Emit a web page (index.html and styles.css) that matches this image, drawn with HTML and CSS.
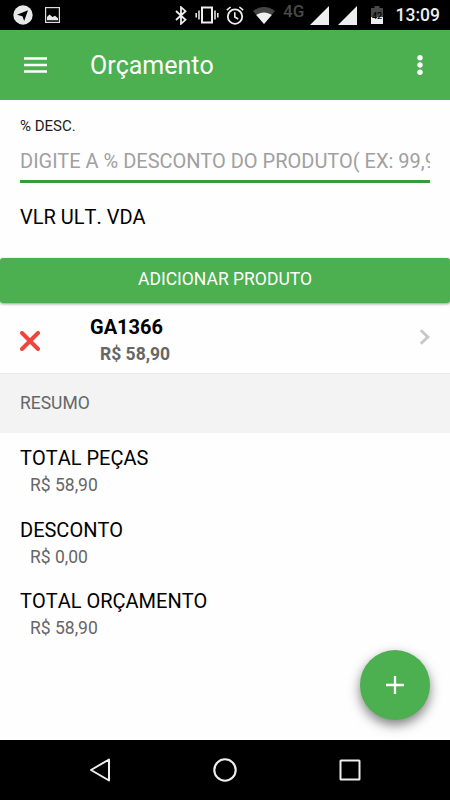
FILE: index.html
```html
<!DOCTYPE html>
<html lang="pt-BR">
<head>
    <meta charset="UTF-8">
    <meta name="viewport" content="width=device-width, initial-scale=1.0">
    <title>Orçamento</title>
    <link rel="stylesheet" href="styles.css">
</head>
<body>
    <div class="status-bar">
        <div class="status-left">
            <svg width="20" height="20" viewBox="0 0 20 20"><circle cx="10" cy="10" r="9.7" fill="#e8e8e8"/><path d="M4 9.8L15 5.2 11.2 16 9.4 11.2z" fill="#000"/></svg>
            <svg width="15" height="16" viewBox="0 0 15 16"><rect x=".6" y=".6" width="13.8" height="14.8" fill="none" stroke="#ddd" stroke-width="1.2"/><path d="M2 13.3V10L4.5 7.6 7.5 10 10 8.8 13 11.2V13.3z" fill="#e8e8e8"/></svg>
        </div>
        <div class="status-right">
            <svg class="bluetooth" width="12" height="19" viewBox="0 0 12 19"><path d="M1 5L10.5 13.8 6 17.8V1.2L10.5 5.2 1 14" fill="none" stroke="#eee" stroke-width="1.8"/></svg>
            <svg class="vibrate" width="24" height="18" viewBox="0 0 24 18"><path d="M7 1.500H17V16.500H7z" fill="none" stroke="#eee" stroke-width="2"/><path d="M4 4.500V13.500M20 4.500V13.500M1.200 7V11.500M22.800 7V11.500" stroke="#eee" stroke-width="1.500"/></svg>
            <svg class="alarm" width="18" height="19" viewBox="0 0 18 19"><circle cx="9" cy="10.6" r="7.2" fill="none" stroke="#eee" stroke-width="1.8"/><path d="M8.8 6.3V11L12.2 13M.8 4.2L4.6 1M17.2 4.2L13.4 1" fill="none" stroke="#eee" stroke-width="1.6"/></svg>
            <svg class="wifi" width="24" height="19" viewBox="0 0 24 19"><path d="M1 5C7.500-.5 16.500-.5 23 5L12 18z" fill="#454545"/><path d="M4.200 9C8.800 5.500 15.200 5.500 19.800 9L12 18z" fill="#f0f0f0"/></svg>
            <span class="network">4G</span>
            <svg class="signal" width="19" height="19" viewBox="0 0 19 19"><path d="M0 19L19 0V19z" fill="#eee"/></svg>
            <svg class="signal-two" width="19" height="19" viewBox="0 0 19 19"><path d="M0 19L19 0V19z" fill="#eee"/></svg>
            <svg class="battery" width="12" height="18" viewBox="0 0 12 18"><path d="M0 2H3.500V0H8.500V2H12V11H0z" fill="#484848"/><path d="M0 11H12V18H0z" fill="#eee"/><text x="6" y="12.500" text-anchor="middle">42</text></svg>
            <span class="clock">13:09</span>
        </div>
    </div>

    <header class="toolbar">
        <svg width="24" height="16" viewBox="0 0 24 16"><path d="M0 1.500H23M0 8H23M0 14.500H23" stroke="#fff" stroke-width="2.400"/></svg>
        <h1>Orçamento</h1>
        <svg width="6" height="20" viewBox="0 0 6 20"><g fill="#fff"><circle cx="3" cy="2.700" r="2.700"/><circle cx="3" cy="10" r="2.700"/><circle cx="3" cy="17.300" r="2.700"/></g></svg>
    </header>

    <main>
        <div class="field">
            <label for="desconto">% DESC.</label>
            <input id="desconto" type="text" placeholder="DIGITE A % DESCONTO DO PRODUTO( EX: 99,99)">
        </div>
        <div class="last-value">VLR ULT. VDA</div>
        <button class="add-button">ADICIONAR PRODUTO</button>

        <div class="product">
            <svg class="remove" width="20" height="20" viewBox="0 0 20 20"><path d="M2 2L18 18M18 2L2 18" stroke="#ee463c" stroke-width="4" stroke-linecap="round"/></svg>
            <div class="product-info">
                <div class="name">GA1366</div>
                <div class="price">R$ 58,90</div>
            </div>
            <svg class="chevron" width="11" height="16" viewBox="0 0 11 16"><path d="M1.800 1.300L8.800 8 1.800 14.700" fill="none" stroke="#c7c7cc" stroke-width="2.900"/></svg>
        </div>

        <div class="divider">RESUMO</div>

        <div class="total">
            <div class="name">TOTAL PEÇAS</div>
            <div class="price">R$ 58,90</div>
        </div>
        <div class="total">
            <div class="name">DESCONTO</div>
            <div class="price">R$ 0,00</div>
        </div>
        <div class="total">
            <div class="name">TOTAL ORÇAMENTO</div>
            <div class="price">R$ 58,90</div>
        </div>

        <button class="fab">
            <svg width="18" height="18" viewBox="0 0 18 18"><path d="M9 0V18M0 9H18" stroke="#fff" stroke-width="2.300"/></svg>
        </button>
    </main>

    <nav class="nav-bar">
        <svg width="22" height="26" viewBox="0 0 22 26"><path d="M2 13L20 2.500V23.500z" fill="none" stroke="#eee" stroke-width="2" stroke-linejoin="round"/></svg>
        <svg width="24" height="24" viewBox="0 0 24 24"><circle cx="12" cy="12" r="10.700" fill="none" stroke="#eee" stroke-width="2.100"/></svg>
        <svg width="22" height="22" viewBox="0 0 22 22"><rect x="1.500" y="1.500" width="19" height="19" rx=".5" fill="none" stroke="#eee" stroke-width="2"/></svg>
    </nav>
</body>
</html>
```
FILE: styles.css
```css
* {
    box-sizing: border-box;
}

body {
    margin: 0;
    width: 450px;
    height: 800px;
    display: flex;
    flex-direction: column;
    overflow: hidden;
    background-color: #fefefe;
    font-family: Roboto, "Liberation Sans", sans-serif;
    font-kerning: none;
    color: #000;
}

svg {
    display: block;
    flex: none;
}

/* Android status bar */
.status-bar {
    height: 30px;
    flex: none;
    display: flex;
    justify-content: space-between;
    align-items: center;
    padding: 0 10px 0 12.5px;
    background-color: #000;
}

.status-left,
.status-right {
    display: flex;
    align-items: center;
}

.status-left {
    gap: 12.5px;
}

.vibrate {
    margin-left: 8px;
}

.alarm {
    margin-left: 7px;
}

.wifi {
    margin-left: 8px;
}

.network {
    width: 24px;
    height: 20px;
    margin: -8px 0 0 7px;
    font-size: 17px;
    line-height: 20px;
    font-weight: 500;
    color: #484848;
}

.signal {
    margin-left: 3px;
}

.signal-two {
    margin-left: 9px;
}

.battery {
    margin-left: 14px;
}

.battery text {
    font-size: 9px;
    font-weight: 500;
}

.clock {
    width: 45px;
    margin-left: 12px;
    font-size: 17.5px;
    font-weight: 500;
    text-align: right;
    color: #eee;
}

/* Header */
.toolbar {
    height: 70px;
    flex: none;
    display: flex;
    align-items: center;
    padding: 0 27px 0 24px;
    background-color: #4caf50;
    color: #fff;
}

.toolbar h1 {
    flex: 1;
    margin: 1px 0 0 42px;
    font-size: 25px;
    font-weight: 400;
}

main {
    flex: 1;
    position: relative;
}

.field {
    padding: 16px 20px 0;
}

.field label {
    display: block;
    font-size: 15px;
    line-height: 20px;
    color: #222;
}

.field input {
    display: block;
    width: 100%;
    height: 47px;
    padding: 5px 0 0;
    border: none;
    border-bottom: 3px solid #359c3a;
    background: none;
    font-family: inherit;
    font-size: 20px;
}

.field input::placeholder {
    color: #a0a0a0;
}

.last-value {
    height: 75px;
    padding: 22px 20px 0;
    font-size: 20px;
    line-height: 24px;
}

.add-button {
    display: block;
    width: 100%;
    height: 45px;
    padding: 0 0 3px;
    border: none;
    border-radius: 3px;
    background-color: #4caf50;
    box-shadow: 0 1px 3px rgba(0, 0, 0, 0.4);
    font-family: inherit;
    font-size: 17.5px;
    color: #fff;
}

/* Product row */
.product {
    display: flex;
    height: 70px;
    padding: 12px 20px 0;
}

.product .remove {
    margin-top: 16px;
}

.product-info {
    flex: 1;
    margin-left: 50px;
    font-weight: 700;
}

.product .chevron {
    margin-top: 14px;
}

.name {
    font-size: 20px;
    line-height: 24px;
}

.price {
    margin-left: 10px;
    padding-top: 3px;
    font-size: 17.5px;
    line-height: 24px;
    color: #666;
}

.divider {
    height: 60px;
    padding-left: 20px;
    border-top: 1px solid #e9e9e9;
    background-color: #f3f3f3;
    font-size: 17.5px;
    line-height: 58px;
    color: #666;
}

.total {
    height: 71.3px;
    padding: 13.3px 20px 0;
}

.fab {
    position: absolute;
    right: 20px;
    bottom: 20px;
    width: 70px;
    height: 70px;
    display: flex;
    justify-content: center;
    align-items: center;
    border: none;
    border-radius: 50%;
    background-color: #4caf50;
    box-shadow: 0 5px 12px rgba(0, 0, 0, 0.5);
}

/* Android navigation buttons */
.nav-bar {
    position: relative;
    height: 60px;
    flex: none;
    display: flex;
    justify-content: space-between;
    align-items: center;
    padding: 0 89px;
    background-color: #000;
}
```
